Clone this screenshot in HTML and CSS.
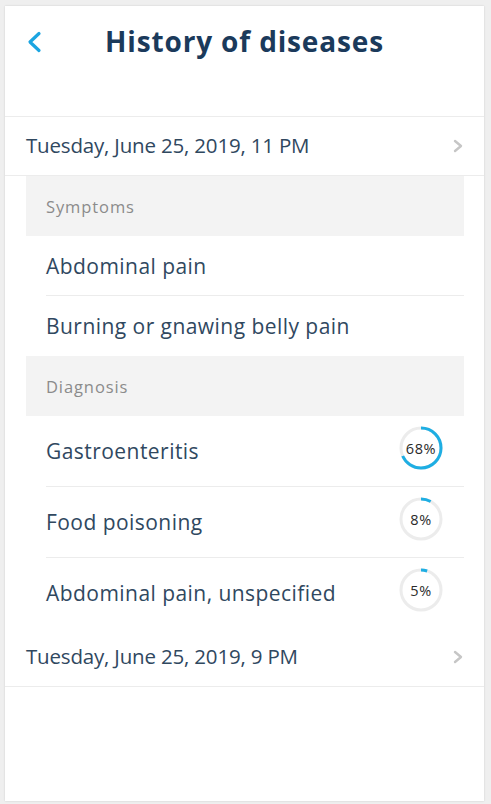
FILE: index.html
```html
<!DOCTYPE html>
<html lang="en">
<head>
<meta charset="utf-8">
<title>History of diseases</title>
<link rel="stylesheet" href="styles.css">
</head>
<body>
<div class="card">
  <header class="header">
    <button class="back" aria-label="Back">
      <svg width="16" height="22" viewBox="0 0 16 22"><path d="M13 2.5 L4 11 L13 19.5" fill="none" stroke="#1ba5e1" stroke-width="3.2" stroke-linecap="round" stroke-linejoin="round"/></svg>
    </button>
    <h1 class="title">History of diseases</h1>
    <span></span>
  </header>

  <div class="date-row">
    <span>Tuesday, June 25, 2019, 11 PM</span>
    <svg class="chev" width="10" height="14" viewBox="0 0 10 14"><path d="M2 2 L8 7 L2 12" fill="none" stroke="#c6c6c6" stroke-width="2.4" stroke-linecap="round" stroke-linejoin="round"/></svg>
  </div>

  <div class="details">
    <div class="section">Symptoms</div>
    <div class="item">Abdominal pain</div>
    <div class="item">Burning or gnawing belly pain</div>
    <div class="section">Diagnosis</div>
    <div class="item diag">
      <span>Gastroenteritis</span>
      <div class="ring">
        <svg width="44" height="44" viewBox="0 0 44 44"><circle cx="22" cy="22" r="20" fill="none" stroke="#ececec" stroke-width="3"/><circle cx="22" cy="22" r="20" fill="none" stroke="#1eaee3" stroke-width="3" stroke-dasharray="85.45 125.66" transform="rotate(-90 22 22)"/></svg>
        <span class="pct">68%</span>
      </div>
    </div>
    <div class="item diag">
      <span>Food poisoning</span>
      <div class="ring">
        <svg width="44" height="44" viewBox="0 0 44 44"><circle cx="22" cy="22" r="20" fill="none" stroke="#ececec" stroke-width="3"/><circle cx="22" cy="22" r="20" fill="none" stroke="#1eaee3" stroke-width="3" stroke-dasharray="10.05 125.66" transform="rotate(-90 22 22)"/></svg>
        <span class="pct">8%</span>
      </div>
    </div>
    <div class="item diag">
      <span>Abdominal pain, unspecified</span>
      <div class="ring">
        <svg width="44" height="44" viewBox="0 0 44 44"><circle cx="22" cy="22" r="20" fill="none" stroke="#ececec" stroke-width="3"/><circle cx="22" cy="22" r="20" fill="none" stroke="#1eaee3" stroke-width="3" stroke-dasharray="6.28 125.66" transform="rotate(-90 22 22)"/></svg>
        <span class="pct">5%</span>
      </div>
    </div>
  </div>

  <div class="date-row bordered">
    <span>Tuesday, June 25, 2019, 9 PM</span>
    <svg class="chev" width="10" height="14" viewBox="0 0 10 14"><path d="M2 2 L8 7 L2 12" fill="none" stroke="#c6c6c6" stroke-width="2.4" stroke-linecap="round" stroke-linejoin="round"/></svg>
  </div>
</div>
</body>
</html>
```

FILE: styles.css
```css
* { box-sizing: border-box; }

html, body {
  margin: 0;
  height: 100%;
}

body {
  background: #efefef;
  padding: 6px 7px 3px 5px;
  font-family: "Open Sans", "Liberation Sans", sans-serif;
  color: #30485f;
}

.card {
  background: #fff;
  height: 795px;
  box-shadow: 0 0 2px rgba(0, 0, 0, 0.14);
  display: flex;
  flex-direction: column;
}

.header {
  height: 111px;
  border-bottom: 1px solid #ececec;
  display: grid;
  grid-template-columns: 1fr auto 1fr;
  align-items: start;
  padding: 0 21px;
}

.back {
  background: none;
  border: 0;
  padding: 0;
  margin-top: 25px;
  width: 16px;
  height: 22px;
  cursor: pointer;
}

.back svg { display: block; }

.title {
  margin: 17px 0 0;
  font-size: 28px;
  font-weight: 700;
  color: #1b3a5b;
  letter-spacing: 0.85px;
  line-height: 36px;
}

.date-row {
  height: 59px;
  border-bottom: 1px solid #ececec;
  display: flex;
  align-items: center;
  justify-content: space-between;
  padding: 0 21px 0 21px;
  font-size: 20.5px;
  letter-spacing: -0.18px;
}

.date-row span { margin-top: -2px; }

.chev { display: block; }

.details {
  margin: 0 20px 0 21px;
}

.section {
  height: 60px;
  background: #f3f3f3;
  display: flex;
  align-items: center;
  padding-left: 20px;
  font-size: 16.5px;
  color: #8b8b8b;
  letter-spacing: 0.9px;
}

.item {
  height: 60px;
  margin-left: 20px;
  display: flex;
  align-items: center;
  justify-content: space-between;
  font-size: 21px;
  letter-spacing: 0.45px;
  border-bottom: 1px solid #ececec;
}

.item:nth-child(3),
.item:last-child { border-bottom: 0; }

.item.diag { height: 71px; }

.item.diag:last-child { height: 70px; }

.ring {
  position: relative;
  width: 44px;
  height: 44px;
  margin-right: 21px;
  margin-bottom: 6px;
}

.ring svg { display: block; }

.pct {
  position: absolute;
  inset: 0;
  display: flex;
  align-items: center;
  justify-content: center;
  font-size: 14.5px;
  color: #2a2a2a;
  letter-spacing: 0.6px;
}
```
